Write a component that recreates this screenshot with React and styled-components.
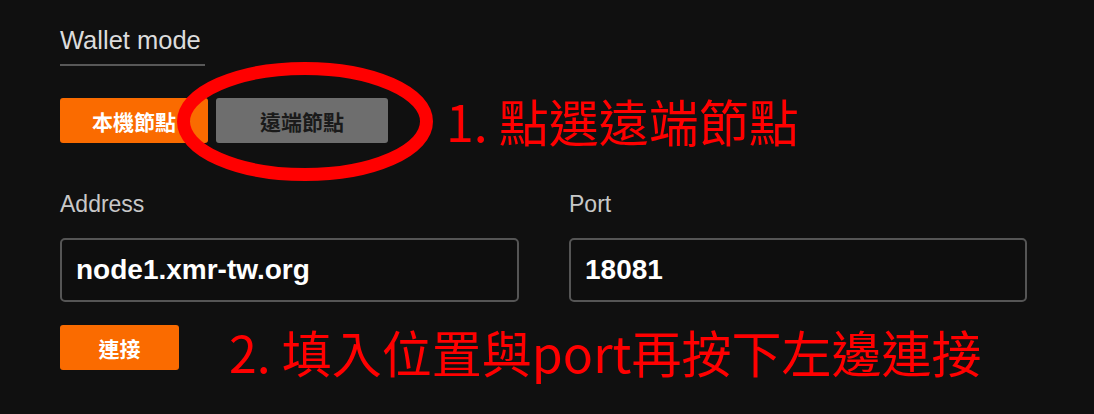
import React from 'react'
import styled, { createGlobalStyle } from 'styled-components'

const GlobalStyle = createGlobalStyle`
  html, body {
    margin: 0;
    padding: 0;
    background: #101010;
  }
  body {
    font-family: "Liberation Sans", Arial, sans-serif;
  }
`

const Page = styled.div`
  position: relative;
  width: 1094px;
  height: 414px;
  box-sizing: border-box;
  padding: 25px 0 0 60px;
  background: #101010;
  overflow: hidden;
`

const SectionTitle = styled.div`
  display: inline-block;
  font-size: 25.5px;
  line-height: 30px;
  color: #dcdcdc;
  padding-bottom: 9px;
  padding-right: 4px;
  border-bottom: 2px solid #585858;
`

const Row = styled.div`
  display: flex;
  align-items: center;
  height: 45px;
  margin-top: ${p => p.$top || 0}px;
`

const ModeButton = styled.button`
  height: 45px;
  width: ${p => p.$width}px;
  margin-right: ${p => p.$gap || 0}px;
  border: none;
  border-radius: 3px;
  background: ${p => (p.$active ? '#fa6b00' : '#6e6e6e')};
  color: ${p => (p.$active ? '#ffffff' : '#1a1a1a')};
  font-family: "Noto Sans CJK TC", sans-serif;
  font-size: 21px;
  font-weight: 700;
  padding: 0;
  cursor: pointer;
`

const Note = styled.div`
  margin-left: ${p => p.$left}px;
  font-family: "Noto Sans CJK TC", sans-serif;
  font-size: 50px;
  line-height: 45px;
  color: #ff0000;
  white-space: nowrap;
  position: relative;
  top: ${p => p.$shift || 0}px;
`

const Fields = styled.div`
  display: grid;
  grid-template-columns: 459px 458px;
  column-gap: 50px;
  margin-top: 47px;
`

const Field = styled.div`
  display: flex;
  flex-direction: column;
`

const Label = styled.label`
  font-size: 23px;
  line-height: 28px;
  color: #c8c8c8;
  margin-bottom: 20px;
`

const Input = styled.input`
  height: 64px;
  box-sizing: border-box;
  border: 2px solid #555555;
  border-radius: 5px;
  background: #0e0e0e;
  color: #ffffff;
  font-family: "Liberation Sans", Arial, sans-serif;
  font-weight: 700;
  font-size: 28px;
  padding: 0 0 0 14px;
  outline: none;
`

const Circle = styled.svg`
  position: absolute;
  left: 170px;
  top: 55px;
  pointer-events: none;
`

export default function App() {
  return (
    <>
      <GlobalStyle />
      <Page>
        <SectionTitle>Wallet mode</SectionTitle>
        <Row $top={32}>
          <ModeButton $active $width={148} $gap={8}>本機節點</ModeButton>
          <ModeButton $width={172}>遠端節點</ModeButton>
          <Note $left={58}>1. 點選遠端節點</Note>
        </Row>
        <Fields>
          <Field>
            <Label>Address</Label>
            <Input defaultValue="node1.xmr-tw.org" />
          </Field>
          <Field>
            <Label>Port</Label>
            <Input defaultValue="18081" />
          </Field>
        </Fields>
        <Row $top={23}>
          <ModeButton $active $width={119}>連接</ModeButton>
          <Note $left={50} $shift={4}>2. 填入位置與port再按下左邊連接</Note>
        </Row>
        <Circle width="275" height="135" viewBox="0 0 275 135">
          <ellipse cx="135" cy="66.5" rx="121.5" ry="53" fill="none" stroke="#ff0000" strokeWidth="13" />
        </Circle>
      </Page>
    </>
  )
}
